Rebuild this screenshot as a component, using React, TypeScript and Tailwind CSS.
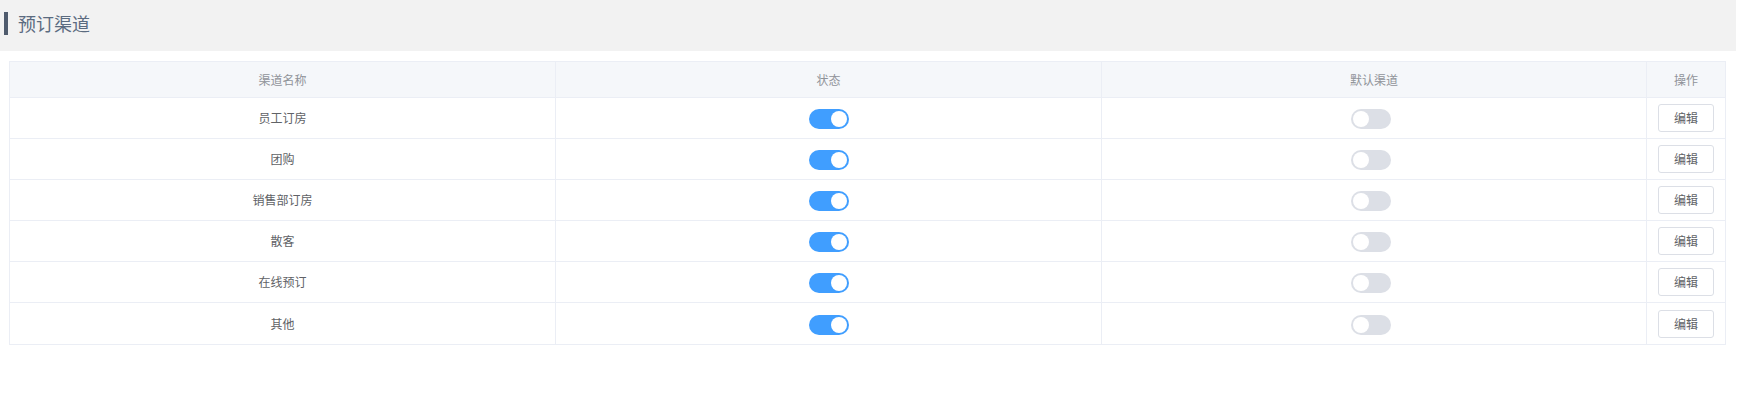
import React from 'react';

interface Channel {
    name: string;
    enabled: boolean;
    isDefault: boolean;
}

const channels: Channel[] = [
    { name: '员工订房', enabled: true, isDefault: false },
    { name: '团购', enabled: true, isDefault: false },
    { name: '销售部订房', enabled: true, isDefault: false },
    { name: '散客', enabled: true, isDefault: false },
    { name: '在线预订', enabled: true, isDefault: false },
    { name: '其他', enabled: true, isDefault: false },
];

const Toggle: React.FC<{ on: boolean }> = ({ on }) => (
    <span
        className={
            'relative mt-[2px] inline-block h-[20px] w-[40px] rounded-full ' +
            (on ? 'bg-[#409eff]' : 'bg-[#dcdfe6]')
        }
    >
        <span
            className={
                'absolute top-[2px] h-[16px] w-[16px] rounded-full bg-white ' +
                (on ? 'left-[22px]' : 'left-[2px]')
            }
        />
    </span>
);

const App: React.FC = () => {
    return (
        <div className="min-h-[410px] w-[1742px] bg-white font-['Noto_Sans_CJK_SC','Noto_Sans',sans-serif]">
            <div className="mr-[6px] flex h-[51px] items-start bg-[#f2f2f2] pt-[12px] pl-[4px]">
                <span className="h-[23px] w-[4px] bg-[#4f5b6d]" />
                <h1 className="ml-[10px] text-[18px] leading-[23px] text-[#5b6b80]">预订渠道</h1>
            </div>

            <div className="mt-[10px] ml-[9px] w-[1717px] border border-[#ebeef5] text-[12px]">
                <div className="grid h-[36px] grid-cols-[546px_546px_545px_1fr] border-b border-[#ebeef5] bg-[#f5f7fa] text-[#909399]">
                    <div className="flex items-center justify-center border-r border-[#ebeef5]">渠道名称</div>
                    <div className="flex items-center justify-center border-r border-[#ebeef5]">状态</div>
                    <div className="flex items-center justify-center border-r border-[#ebeef5]">默认渠道</div>
                    <div className="flex items-center justify-center">操作</div>
                </div>
                {channels.map((c, i) => (
                    <div
                        key={c.name}
                        className={
                            'grid h-[41px] grid-cols-[546px_546px_545px_1fr] text-[#606266] ' +
                            (i < channels.length - 1 ? 'border-b border-[#ebeef5]' : 'h-[40px]')
                        }
                    >
                        <div className="flex items-center justify-center border-r border-[#ebeef5]">{c.name}</div>
                        <div className="flex items-center justify-center border-r border-[#ebeef5]">
                            <Toggle on={c.enabled} />
                        </div>
                        <div className="flex items-center justify-center border-r border-[#ebeef5] pr-[6px]">
                            <Toggle on={c.isDefault} />
                        </div>
                        <div className="flex items-center justify-center">
                            <button className="h-[28px] w-[56px] rounded-[3px] border border-[#dcdfe6] bg-white text-[12px] text-[#606266]">
                                编辑
                            </button>
                        </div>
                    </div>
                ))}
            </div>
        </div>
    );
};

export default App;
